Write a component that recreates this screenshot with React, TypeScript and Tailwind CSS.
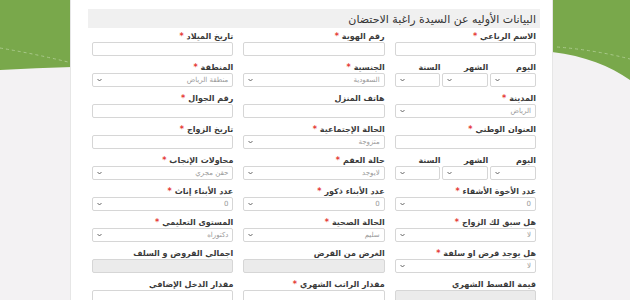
type Field =
  | { kind: "input"; label: string; req?: boolean; disabled?: boolean }
  | { kind: "select"; label: string; req?: boolean; value: string }
  | { kind: "date" };

const ROWS: Field[][] = [
  [
    { kind: "input", label: "الاسم الرباعي", req: true },
    { kind: "input", label: "رقم الهوية", req: true },
    { kind: "input", label: "تاريخ الميلاد", req: true },
  ],
  [
    { kind: "date" },
    { kind: "select", label: "الجنسية", req: true, value: "السعودية" },
    { kind: "select", label: "المنطقة", req: true, value: "منطقة الرياض" },
  ],
  [
    { kind: "select", label: "المدينة", req: true, value: "الرياض" },
    { kind: "input", label: "هاتف المنزل" },
    { kind: "input", label: "رقم الجوال", req: true },
  ],
  [
    { kind: "input", label: "العنوان الوطني", req: true },
    { kind: "select", label: "الحالة الإجتماعية", req: true, value: "متزوجة" },
    { kind: "input", label: "تاريخ الزواج", req: true },
  ],
  [
    { kind: "date" },
    { kind: "select", label: "حالة العقم", req: true, value: "لايوجد" },
    { kind: "select", label: "محاولات الإنجاب", req: true, value: "حقن مجري" },
  ],
  [
    { kind: "select", label: "عدد الأخوة الأشقاء", req: true, value: "0" },
    { kind: "select", label: "عدد الأبناء ذكور", req: true, value: "0" },
    { kind: "select", label: "عدد الأبناء إناث", req: true, value: "0" },
  ],
  [
    { kind: "select", label: "هل سبق لك الزواج", req: true, value: "لا" },
    { kind: "select", label: "الحالة الصحية", req: true, value: "سليم" },
    { kind: "select", label: "المستوى التعليمي", req: true, value: "دكتوراه" },
  ],
  [
    { kind: "select", label: "هل يوجد قرض او سلفة", req: true, value: "لا" },
    { kind: "input", label: "الغرض من القرض", disabled: true },
    { kind: "input", label: "اجمالي القروض و السلف", disabled: true },
  ],
  [
    { kind: "input", label: "قيمة القسط الشهري", disabled: true },
    { kind: "input", label: "مقدار الراتب الشهري", req: true },
    { kind: "input", label: "مقدار الدخل الإضافي" },
  ],
];

function Label({ text, req }: { text: string; req?: boolean }) {
  return (
    <div className="h-[11px] text-[8px] leading-[11px] font-bold text-[#3a3a3a] whitespace-nowrap">
      {text}
      {req && <span className="text-[#e53935] mr-[3px]">*</span>}
    </div>
  );
}

function Chevron() {
  return (
    <svg width="5" height="4" viewBox="0 0 5 4" className="shrink-0">
      <polyline points="0.5,1 2.5,3 4.5,1" fill="none" stroke="#555" strokeWidth="0.9" />
    </svg>
  );
}

function SelectBox({ value }: { value: string }) {
  return (
    <div className="h-[14px] border border-[#d6d6d6] rounded-[2px] bg-white flex items-center justify-between pr-[4px] pl-[4px]">
      <span className="text-[7px] text-[#999]">{value}</span>
      <Chevron />
    </div>
  );
}

function FieldCell({ f }: { f: Field }) {
  if (f.kind === "date") {
    return (
      <div className="grid grid-cols-3 gap-x-[2px]">
        {["اليوم", "الشهر", "السنة"].map((l) => (
          <div key={l}>
            <Label text={l} />
            <SelectBox value="" />
          </div>
        ))}
      </div>
    );
  }
  return (
    <div>
      <Label text={f.label} req={f.req} />
      {f.kind === "select" ? (
        <SelectBox value={f.value} />
      ) : (
        <div
          className={`h-[14px] border border-[#d6d6d6] rounded-[2px] ${
            f.disabled ? "bg-[#ebebeb]" : "bg-white"
          }`}
        />
      )}
    </div>
  );
}

export default function App() {
  return (
    <div
      className="relative w-[630px] h-[300px] overflow-hidden bg-[#f3f2f3]"
      style={{ fontFamily: '"DejaVu Sans", sans-serif' }}
    >
      {/* green background swooshes */}
      <svg width="630" height="90" viewBox="0 0 630 90" className="absolute left-0 top-0">
        <path d="M0 0 H72 V67 Q36 68 0 70 Z" fill="#79a84b" />
        <path d="M0 48 Q36 54 72 63" fill="none" stroke="#a9c98a" strokeWidth="1" strokeDasharray="3 3" />
        <path d="M552 0 H630 V80 C610 66 585 56 552 52 Z" fill="#79a84b" />
        <path d="M557 47 Q595 50 630 59" fill="none" stroke="#a9c98a" strokeWidth="1" strokeDasharray="3 3" />
      </svg>

      <div
        dir="rtl"
        className="relative ml-[70px] w-[483px] h-full bg-white border-x border-[#e6e6e6] pl-[17px] pr-[12px] pt-[9px]"
      >
        <div className="h-[19px] bg-[#f0f0f0] flex items-center pr-[4px] pt-[2px]">
          <h2 className="text-[11px] text-[#333] leading-none">
            البيانات الأوليه عن السيدة راغبة الاحتضان
          </h2>
        </div>

        <div className="mt-[3px] px-[4px] flex flex-col gap-y-[6px]">
          {ROWS.map((row, ri) => (
            <div key={ri} className="grid grid-cols-3 gap-x-[10px]">
              {row.map((f, ci) => (
                <FieldCell key={ci} f={f} />
              ))}
            </div>
          ))}
        </div>
      </div>
    </div>
  );
}
